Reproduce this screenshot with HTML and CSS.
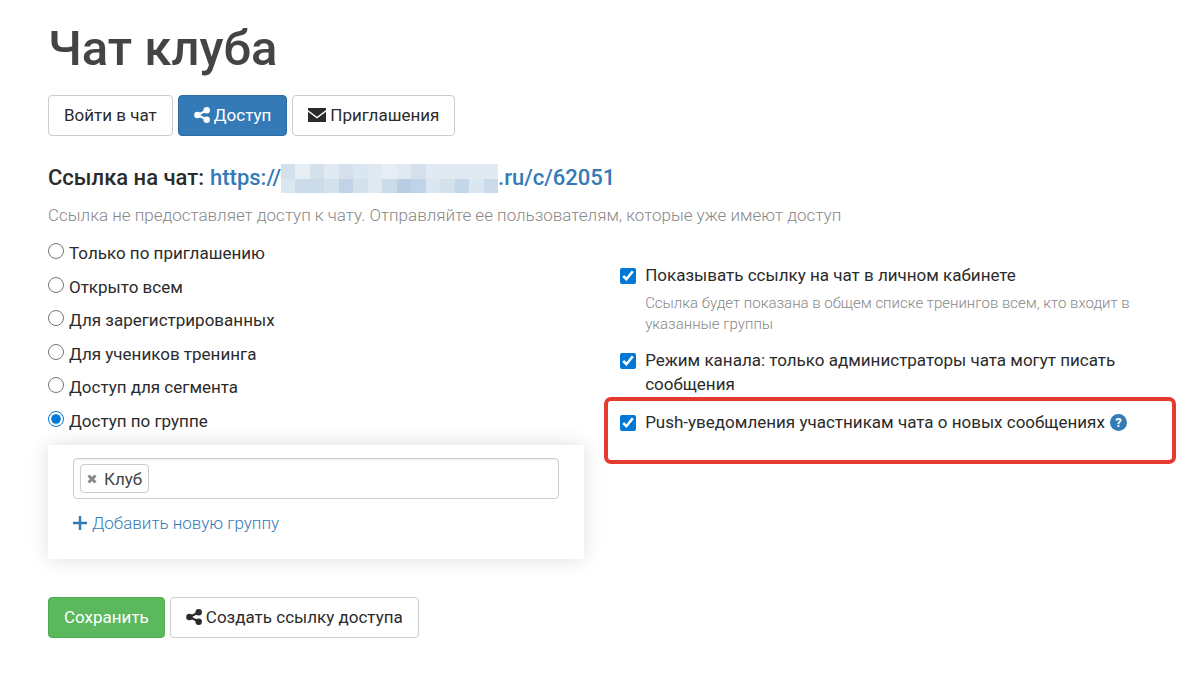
FILE: index.html
```html
<!DOCTYPE html>
<html lang="ru">
<head>
<meta charset="utf-8">
<meta name="viewport" content="width=device-width, initial-scale=1">
<title>Чат клуба</title>
<link rel="stylesheet" href="styles.css">
</head>
<body>
<svg class="sprite" aria-hidden="true">
  <symbol id="share" viewBox="0 0 16 16">
    <path d="M3.6 8 12.4 3.5M3.6 8l8.8 4.5" fill="none" stroke="currentColor" stroke-width="2"/>
    <circle cx="3.4" cy="8" r="3.2" fill="currentColor"/>
    <circle cx="12.7" cy="3.3" r="3.2" fill="currentColor"/>
    <circle cx="12.7" cy="12.7" r="3.2" fill="currentColor"/>
  </symbol>
</svg>
<main class="page">
  <h1 class="title">Чат клуба</h1>
  <nav class="buttons">
    <button class="btn" type="button">Войти в чат</button>
    <button class="btn btn-primary" type="button"><svg class="icon"><use href="#share"/></svg>Доступ</button>
    <button class="btn" type="button"><svg class="icon-mail" viewBox="0 0 18 14"><path d="M0 0h18v2L9 8.700 0 2z" fill="currentColor"/><path d="M0 3.700 9 10.500l9-6.800V14H0z" fill="currentColor"/></svg>Приглашения</button>
  </nav>

  <h2 class="link-line"><span>Ссылка на чат:</span>
    <a class="chat-link" href="#"><span>https://</span><svg class="mosaic" viewBox="0 0 15 2" preserveAspectRatio="none" shape-rendering="crispEdges" aria-hidden="true">
      <path fill="#dfe9f2" d="M0 0h15v2H0z"/>
      <path fill="#d3e1ed" d="M0 0h1v1H0zM2 0h1v1H2zM3 1h1v1H3zM5 1h1v1H5zM11 1h1v1h-1z"/>
      <path fill="#e6edf5" d="M1 0h1v1H1zM7 0h1v1H7z"/>
      <path fill="#e1e9f2" d="M3 0h1v1H3zM8 0h1v1H8zM10 0h5v1h-5z"/>
      <path fill="#d5e0ed" d="M4 0h1v1H4zM9 0h1v1H9z"/>
      <path fill="#dae7f1" d="M0 1h1v1H0zM5 0h1v1H5zM10 1h1v1h-1zM13 1h1v1h-1z"/>
      <path fill="#cbdbea" d="M1 1h2v1H1zM7 1h1v1H7zM14 1h1v1h-1z"/>
      <path fill="#c0d3e8" d="M4 1h1v1H4zM9 1h1v1H9z"/>
      <path fill="#b9cee4" d="M8 1h1v1H8z"/>
      <path fill="#c4d7e8" d="M12 1h1v1h-1z"/>
    </svg><span>.ru/c/62051</span></a>
  </h2>
  <p class="note">Ссылка не предоставляет доступ к чату. Отправляйте ее пользователям, которые уже имеют доступ</p>

  <form class="form">
    <div class="columns">
      <section>
        <div class="radios">
          <label class="radio"><input type="radio" name="access"><span>Только по приглашению</span></label>
          <label class="radio"><input type="radio" name="access"><span>Открыто всем</span></label>
          <label class="radio"><input type="radio" name="access"><span>Для зарегистрированных</span></label>
          <label class="radio"><input type="radio" name="access"><span>Для учеников тренинга</span></label>
          <label class="radio"><input type="radio" name="access"><span>Доступ для сегмента</span></label>
          <label class="radio"><input type="radio" name="access" checked><span>Доступ по группе</span></label>
        </div>
        <div class="card">
          <div class="tags">
            <span class="tag"><button class="tag-remove" type="button" aria-label="Удалить"><svg viewBox="0 0 10 10"><path d="M1.500 1.500l7 7M8.500 1.500l-7 7" stroke="currentColor" stroke-width="3"/></svg></button>Клуб</span>
            <input class="tags-input" type="text" aria-label="Группы">
          </div>
          <a class="add" href="#"><svg class="icon-plus" viewBox="0 0 14 14"><path d="M7 0v14M0 7h14" stroke="currentColor" stroke-width="2.400"/></svg>Добавить новую группу</a>
        </div>
      </section>
      <section class="options">
        <div class="option">
          <input type="checkbox" id="show" checked>
          <div><label for="show">Показывать ссылку на чат в личном кабинете</label>
          <p class="hint">Ссылка будет показана в общем списке тренингов всем, кто входит в указанные группы</p></div>
        </div>
        <div class="option">
          <input type="checkbox" id="channel" checked>
          <label for="channel">Режим канала: только администраторы чата могут писать сообщения</label>
        </div>
        <div class="option option-marked">
          <input type="checkbox" id="push" checked>
          <label for="push">Push-уведомления участникам чата о новых сообщениях</label>
          <button class="help" type="button" aria-label="Справка">?</button>
        </div>
      </section>
    </div>
    <div class="buttons">
      <button class="btn btn-success" type="button">Сохранить</button>
      <button class="btn" type="button"><svg class="icon"><use href="#share"/></svg>Создать ссылку доступа</button>
    </div>
  </form>
</main>
</body>
</html>
```
FILE: styles.css
```css
* { box-sizing: border-box; }
body {
  margin: 0;
  background: #fff;
  color: #2b2b2b;
  font: 400 17px/24px Roboto, "Noto Sans", sans-serif;
}
h1, h2, p { margin: 0; }
a { color: #337ab7; text-decoration: none; }
input { accent-color: #0078d7; }
.sprite { position: absolute; width: 0; height: 0; }
.page { padding: 21px 24px 56px 48px; }
.title { color: #444; font-size: 49px; font-weight: 500; line-height: 56px; }
.buttons { display: flex; flex-wrap: wrap; gap: 5px; }
nav.buttons { margin-top: 18px; }
.btn {
  display: flex;
  align-items: center;
  gap: 4px;
  height: 41px;
  padding: 0 15px 2px;
  border: 1px solid #ccc;
  border-radius: 4px;
  background: #fff;
  color: #2b2b2b;
  font: inherit;
}
.btn-primary { background: #337ab7; border-color: #2e6da4; color: #fff; }
.btn-success { background: #5cb85c; border-color: #4cae4c; color: #fff; }
.icon { width: 16px; height: 16px; }
.icon-mail { width: 18px; height: 14px; }
.link-line {
  display: flex;
  align-items: center;
  gap: 6px;
  margin-top: 27px;
  font-size: 22px;
  font-weight: 500;
  line-height: 30px;
}
.chat-link { display: flex; align-items: center; }
.mosaic { width: 217px; height: 29px; }
.note { margin-top: 10px; color: #888; font-weight: 300; }
.columns { display: grid; grid-template-columns: 15fr 16fr; gap: 20px; margin-top: 14px; }
.radios { display: flex; flex-direction: column; justify-content: space-between; min-height: 192px; }
.radio { display: flex; align-items: flex-start; gap: 5px; }
.radio input { width: 16px; height: 16px; margin: 2px 0 0; }
.card {
  margin-top: 12px;
  padding: 13px 25px 24px;
  background: #fff;
  box-shadow: 0 0 20px rgba(0, 0, 0, 0.13);
}
.tags {
  display: flex;
  align-items: center;
  height: 41px;
  padding: 0 6px;
  border: 1px solid #ccc;
  border-radius: 4px;
  box-shadow: inset 0 1px 1px rgba(0, 0, 0, 0.08);
}
.tag {
  display: flex;
  align-items: center;
  gap: 7px;
  height: 29px;
  padding: 0 6px;
  border: 1px solid #ccc;
  border-radius: 4px;
  color: #444;
}
.tag-remove { display: flex; padding: 0; border: 0; background: none; color: #888; }
.tag-remove svg { width: 10px; height: 10px; }
.tags-input { flex: 1; min-width: 0; border: 0; outline: 0; background: none; font: inherit; }
.add { display: flex; align-items: center; gap: 5px; width: fit-content; margin-top: 12px; font-weight: 300; }
.icon-plus { width: 14px; height: 14px; }
.options { padding-top: 22px; }
.option { display: flex; align-items: flex-start; gap: 9px; padding: 0 24px 0 16px; }
.option + .option { margin-top: 13px; }
.option input { flex: none; width: 16px; height: 16px; margin: 5px 0 0; }
.hint { margin-top: 6px; color: #888; font-size: 15px; font-weight: 300; line-height: 21px; }
.option + .option-marked {
  min-height: 67px;
  margin-top: 1px;
  padding: 9px 12px;
  border: 4px solid #e53a2f;
  border-radius: 7px;
}
.help {
  width: 17px;
  height: 17px;
  margin: 4px 0 0 -4px;
  padding: 0;
  border: 0;
  border-radius: 50%;
  background: #337ab7;
  color: #fff;
  font: 700 13px/17px Roboto, sans-serif;
}
.columns + .buttons { margin-top: 38px; }
```
